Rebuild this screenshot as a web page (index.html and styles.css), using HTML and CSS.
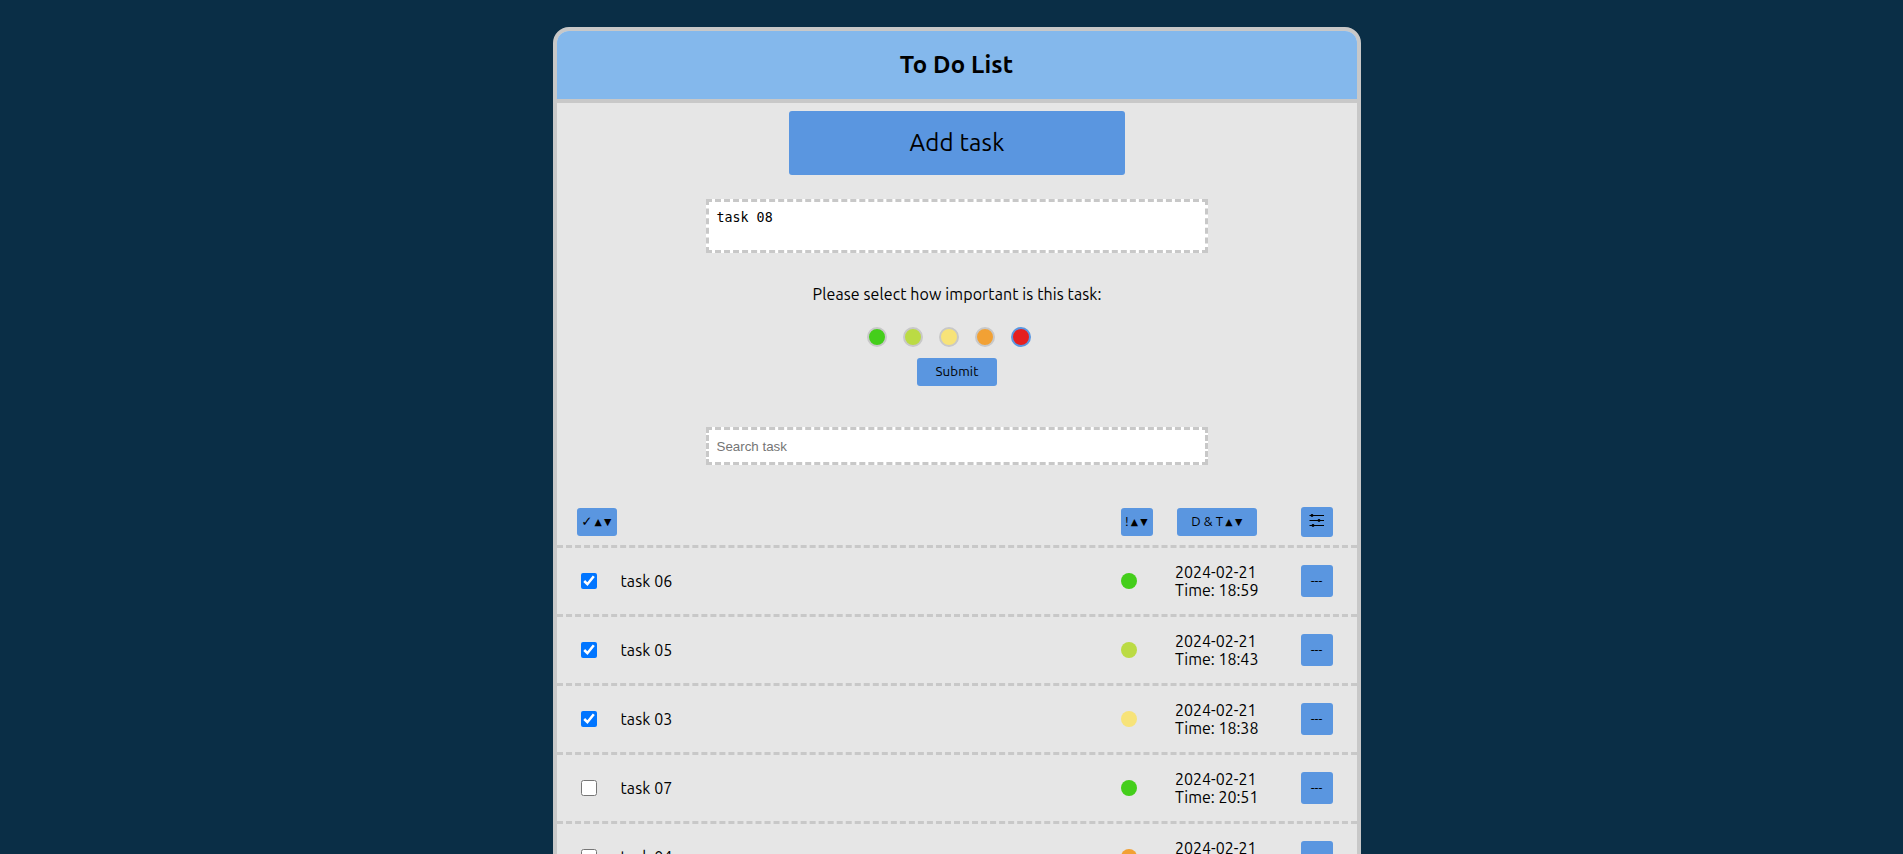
FILE: index.html
```html
<!DOCTYPE html>
<html lang="en">
<head>
<meta charset="utf-8">
<title>To Do List</title>
<link rel="stylesheet" href="styles.css">
</head>
<body>
<main class="card">
  <header class="header"><h1 class="title">To Do List</h1></header>
  <button class="btn add">Add task</button>
  <textarea class="field note" spellcheck="false">task 08</textarea>
  <p class="question">Please select how important is this task:</p>
  <div class="levels">
    <span class="level green"></span><span class="level lime"></span><span class="level yellow"></span><span class="level orange"></span><span class="level red selected"></span>
  </div>
  <button class="btn submit">Submit</button>
  <input class="field search" type="text" placeholder="Search task">
  <div class="toolbar">
    <button class="btn sort-done"><span class="tick">✓</span><span class="arrows">▲▼</span></button>
    <button class="btn sort-level">!<span class="arrows">▲▼</span></button>
    <button class="btn sort-date">D &amp; T<span class="arrows">▲▼</span></button>
    <button class="btn filter">
      <svg class="sliders" width="16" height="14" viewBox="0 0 16 14"><path d="M.5 2.5h14.5M.5 7.5h14.5M.5 12.5h14.5" stroke="#000" stroke-width="1"/><circle cx="3" cy="2.5" r="1.4"/><circle cx="10" cy="7.5" r="1.4"/><circle cx="4" cy="12.5" r="1.4"/></svg>
    </button>
  </div>
  <ul class="tasks">
    <li class="task"><input class="check" type="checkbox" checked><span class="name">task 06</span><span class="dot green"></span><div class="date"><span class="day">2024-02-21</span><span class="time">Time: 18:59</span></div><button class="btn more">---</button></li>
    <li class="task"><input class="check" type="checkbox" checked><span class="name">task 05</span><span class="dot lime"></span><div class="date"><span class="day">2024-02-21</span><span class="time">Time: 18:43</span></div><button class="btn more">---</button></li>
    <li class="task"><input class="check" type="checkbox" checked><span class="name">task 03</span><span class="dot yellow"></span><div class="date"><span class="day">2024-02-21</span><span class="time">Time: 18:38</span></div><button class="btn more">---</button></li>
    <li class="task"><input class="check" type="checkbox"><span class="name">task 07</span><span class="dot green"></span><div class="date"><span class="day">2024-02-21</span><span class="time">Time: 20:51</span></div><button class="btn more">---</button></li>
    <li class="task"><input class="check" type="checkbox"><span class="name">task 04</span><span class="dot orange"></span><div class="date"><span class="day">2024-02-21</span><span class="time">Time: 18:41</span></div><button class="btn more">---</button></li>
  </ul>
</main>
</body>
</html>
```

FILE: styles.css
```css
* { box-sizing: border-box; }
html { height: 100%; overflow: hidden; }
body {
  margin: 0;
  height: 100%;
  padding-top: 27px;
  padding-left: 11px;
  overflow: hidden;
  background: #0a2e46;
  color: #000;
  font: 16px/18px Ubuntu, "Noto Sans", sans-serif;
}
.card {
  display: flex;
  flex-direction: column;
  align-items: center;
  width: 808px;
  margin: 0 auto;
  border: 4px solid #c8c8c8;
  border-radius: 16px;
  background: #e6e6e6;
  overflow: hidden;
}
.header {
  display: flex;
  align-items: center;
  justify-content: center;
  width: 100%;
  height: 72px;
  border-bottom: 4px solid #c8c8c8;
  background: #84b8ec;
}
.title { margin: 0 1px 0 0; font-size: 24px; line-height: 28px; letter-spacing: 0.14px; }
.btn {
  display: flex;
  align-items: center;
  justify-content: center;
  flex: none;
  padding: 0;
  border: 0;
  border-radius: 3px;
  background: #5a96e0;
  color: #000;
  font: 13.333px/16px Ubuntu, "Noto Sans", sans-serif;
}
.add { width: 336px; height: 64px; margin-top: 8px; font-size: 24px; line-height: 28px; letter-spacing: 0.22px; }
.field {
  width: 502px;
  border: 3px dashed #c8c8c8;
  border-radius: 0;
  background: #fff;
  padding: 7px 7.5px;
  outline: 0;
}
.note {
  height: 54px;
  margin: 24px 0 0;
  padding-top: 8px;
  resize: none;
  font: 13.333px/16px "DejaVu Sans Mono", monospace;
  color: #000;
}
.question { margin: 32px 0 0; letter-spacing: 0.1px; }
.levels { display: flex; gap: 16px; width: 180px; margin-top: 24px; }
.level { width: 20px; height: 20px; border: 2px solid #c8c8c8; border-radius: 50%; }
.level.selected { border-color: #5a96e0; }
.green { background: #44ce1b; }
.lime { background: #bbdb44; }
.yellow { background: #f7e379; }
.orange { background: #f2a134; }
.red { background: #e51f1f; }
.submit { width: 80px; height: 28px; margin-top: 11px; letter-spacing: 0.12px; }
.search { height: 38px; margin-top: 41px; font: 13.333px "Liberation Sans", Arial, sans-serif; }
.search::placeholder { color: #757575; }
.toolbar {
  display: flex;
  align-items: center;
  width: 100%;
  height: 83px;
  padding: 34px 24px 0 20px;
  border-bottom: 3px dashed #c8c8c8;
}
.arrows { margin-left: 2px; font: 9.5px/16px "DejaVu Sans", sans-serif; letter-spacing: 2.4px; }
.tick { font: 13.333px/16px "DejaVu Sans", sans-serif; }
.sort-done { width: 40px; height: 28px; padding-left: 1px; }
.sort-level { width: 32px; height: 28px; margin-left: auto; padding-left: 1px; }
.sort-date { width: 80px; height: 28px; margin-left: 24px; padding-left: 2px; letter-spacing: 0.1px; }
.filter { width: 32px; height: 30px; margin-left: 44px; }
.sliders { margin-bottom: 4px; }
.tasks { width: 100%; margin: 0; padding: 0; list-style: none; }
.task {
  display: flex;
  align-items: center;
  height: 69px;
  padding: 0 24px;
  border-bottom: 3px dashed #c8c8c8;
}
.check { width: 16px; height: 16px; margin: 0 23.5px 0 0; }
.name { flex: 1; letter-spacing: 0.1px; }
.dot { width: 16px; height: 16px; border-radius: 50%; }
.date { display: flex; flex-direction: column; width: 126px; margin-left: 38px; white-space: nowrap; }
.more { width: 32px; height: 32px; padding: 0 1px 1px 0; }
```
